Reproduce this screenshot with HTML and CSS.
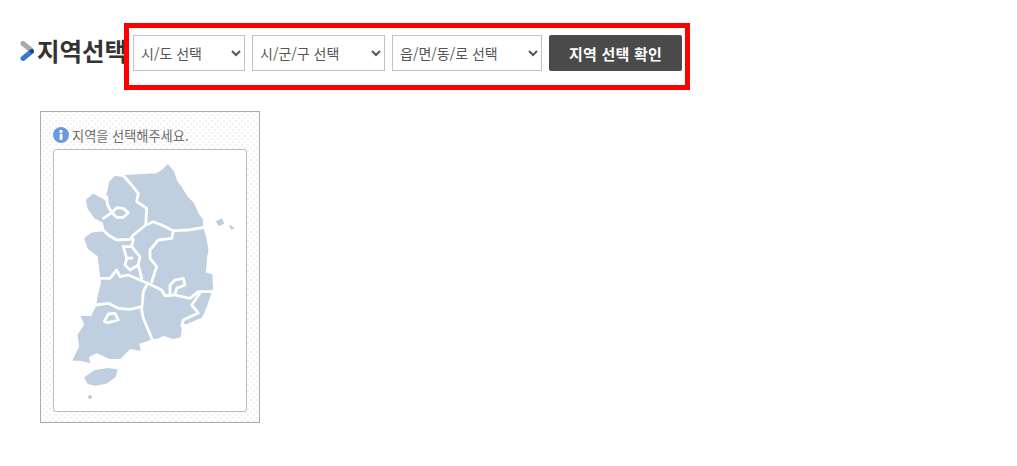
FILE: index.html
```html
<!DOCTYPE html>
<html lang="ko">
<head>
    <meta charset="UTF-8">
    <title>지역선택</title>
    <link rel="stylesheet" href="styles.css">
</head>
<body>
    <div class="top">
        <h2 class="title">
            <svg class="title-icon" viewBox="0 0 15 20" width="15" height="20">
                <path d="M3 2.5 L11 9" class="arrow-grey"/>
                <path d="M11.5 10.5 L3 17.5" class="arrow-blue"/>
                <circle cx="11.8" cy="10.2" r="2" fill="#1f3f70"/>
            </svg>
            지역선택
        </h2>
        <form class="search">
            <select class="sel sel1"><option>시/도 선택</option></select>
            <select class="sel sel2"><option>시/군/구 선택</option></select>
            <select class="sel sel3"><option>읍/면/동/로 선택</option></select>
            <button type="button" class="btn">지역 선택 확인</button>
        </form>
    </div>

    <div class="panel">
        <p class="info">
            <svg viewBox="0 0 16 16" width="16" height="16">
                <circle cx="8" cy="8" r="8" fill="#6a9be0"/>
                <rect x="6.7" y="6.8" width="2.8" height="6" fill="#fff"/>
                <circle cx="8" cy="4.4" r="1.6" fill="#fff"/>
            </svg>
            지역을 선택해주세요.
        </p>
        <div class="mapbox">
            <!-- 지도: 좌표는 화면 기준 -->
            <svg class="map" viewBox="54 150 192 261" width="192" height="261">
                <path class="land" d="M110 181.7 L115 176.7 L123.3 177.7 L125 175.7 L138.3 175 L156.7 174 L162.3 170.7 L167.7 165 L173.3 171.7 L176.7 181.7 L181.7 188.3 L186.7 196.7 L193.3 203.3 L197.7 213.3 L202.3 220 L202.3 226.7 L205.7 238 L207.7 250 L206.7 255 L205 273 L211.7 275 L212.3 288 L210 295 L206.7 305 L201.7 316.7 L186.7 323.3 L181.7 323.3 L180 336.7 L173.3 338.3 L163.3 335 L158.3 337.7 L153.3 338.3 L148.3 340 L138.3 343.3 L140 350 L130 348.3 L120 358.3 L110 358.3 L96.7 352.3 L88.3 356.7 L89.3 362.3 L80 360 L73.3 360 L80 346.7 L78.3 335 L85 325 L81.7 316.7 L91.7 316.7 L96.7 306.7 L98.3 296.7 L101.7 283.3 L100 270 L98.3 256 L88.3 248.3 L85 238.3 L91.7 233.3 L101.7 232.3 L106 233 L103.3 221.7 L95 217.7 L88.3 208.3 L86.7 200 L93.3 194.3 L103.3 200 L107 203 L106.7 196 L108.3 190 Z"/>
                <path class="land" d="M216.7 221.7 L221.7 219.3 L223.3 223.3 L219 225.3 Z"/>
                <path class="land" d="M230 225.7 L233.3 228.3 L231.5 229 Z"/>
                <path class="land" d="M85 377.7 L95 370.7 L108.3 368.7 L116.7 370 L115 376.7 L106.7 382.7 L95 385 L88.3 383.3 Z"/>
                <circle class="land" cx="90" cy="397" r="1.2"/>

                <path class="line" d="M124.3 176.7 L131.7 185 L138.3 193.3 L136.7 201.7 L146.7 208.3 L145.7 225 L133.3 235 L130 239.3 L116.7 240 L108.3 235 L102 229"/>
                <path class="line" d="M145.7 225 L153.3 221.7 L161.7 225 L171.7 230 L175 230.7 L188.3 230 L204 227.3"/>
                <path class="line" d="M173.3 231.7 L171.7 238.3 L158.3 240 L150 250 L150 258.3 L156.7 266.7 L151.7 281.7"/>
                <path class="line" d="M147.7 283.3 L161.7 290 L165 295.7 L175 295 L190 298.3 L198.3 291.7 L213 291.7"/>
                <path class="line" d="M170 295 L170 285 L175 280 L183.3 278.3 L185 285 L176.7 288.3 L175 294.3"/>
                <path class="line" d="M200 293 L191.7 305 L198.3 313 L183.3 320 L181.7 326"/>
                <path class="line" d="M147.7 283.3 L143.3 291.7 L141.7 310 L143.3 318.3 L148.3 330 L152.3 340"/>
                <path class="line" d="M95 305 L108.3 303.3 L118.3 308.3 L130 309.3 L141.7 306.7"/>
                <path class="line" d="M98 278.3 L110 278.3 L116.7 270 L120 276.7 L128.3 275 L140 280 L147.7 283.3"/>
                <path class="line" d="M133.3 239 L131.7 246.7 L123.3 246.7 L126.7 258.3 L125 265 L130 270 L138.3 265 L140 256.7 L131.7 246.7 M126.7 258.3 L132 258 M138.3 265 L140 271.7 L141.7 278.3"/>
                <path class="line" d="M104.3 321.7 L108.3 314 L115 313.3 L118.3 320 L108.3 322.7 Z"/>
                <path class="line" d="M111.7 212.7 L116.7 207.7 L123.3 208.3 L128.3 212.7 L123.3 217.3 L116.7 217.3 Z"/>
                <path class="line" d="M106.7 196.7 L107.5 205 L111.7 212.7 L103.3 218.3"/>
            </svg>
        </div>
    </div>
</body>
</html>
```

FILE: styles.css
```css
*{
    margin: 0;
    padding: 0;
    box-sizing: border-box;
}

body{
    font-family: "Noto Sans CJK KR", "Noto Sans", sans-serif;
    background: #fff;
    color: #333;
}

.top{
    display: flex;
    align-items: center;
    padding: 23px 0 0 20px;
}

.title{
    display: flex;
    align-items: center;
    width: 104px;
    white-space: nowrap;
    font-size: 24.5px;
    font-weight: 700;
    letter-spacing: 0;
    color: #333;
    margin-top: -12px;
}

.title-icon{
    flex: none;
    margin-right: 2px;
}

.arrow-grey,.arrow-blue{
    fill: none;
    stroke-width: 5;
    stroke-linecap: round;
}

.arrow-grey{
    stroke: #a9a9a9;
}

.arrow-blue{
    stroke: #3a78d0;
}

.search{
    display: flex;
    gap: 7px;
    width: 566px;
    height: 67px;
    padding: 7px 3px 0 4px;
    border: 5px solid #f00;
    position: relative;
}

.sel{
    height: 36px;
    padding-left: 3px;
    border: 1px solid #bcc3c9;
    background: #fff;
    font-family: inherit;
    font-size: 14px;
    color: #555;
}

.sel1{
    width: 112px;
}

.sel2{
    width: 133px;
}

.sel3{
    width: 150px;
}

.btn{
    width: 133px;
    height: 36px;
    border: 0;
    border-radius: 2px;
    background: #4a4a4a;
    font-family: inherit;
    font-size: 15px;
    font-weight: 700;
    letter-spacing: 0.2px;
    color: #fff;
}

.panel{
    width: 220px;
    height: 312px;
    margin: 21px 0 0 40px;
    padding: 15px 12px 10px;
    border: 1px solid #a6a9b5;
    background-color: #fff;
    background-image: radial-gradient(#f1f1f1 1px, transparent 1.3px), radial-gradient(#f1f1f1 1px, transparent 1.3px);
    background-size: 6px 6px;
    background-position: 0 0, 3px 3px;
}

.info{
    display: flex;
    align-items: center;
    gap: 3px;
    height: 16px;
    margin-bottom: 6px;
    font-size: 13.2px;
    color: #6e6e6e;
}

.mapbox{
    width: 194px;
    height: 263px;
    border: 1px solid #b9bcc4;
    border-radius: 3px;
    background: #fff;
}

.map{
    display: block;
}

.land{
    fill: #bfcfdf;
    stroke: #bfcfdf;
    stroke-width: 1.5;
    stroke-linejoin: round;
}

.line{
    fill: none;
    stroke: #fff;
    stroke-width: 2.8;
    stroke-linejoin: round;
    stroke-linecap: round;
}
```
